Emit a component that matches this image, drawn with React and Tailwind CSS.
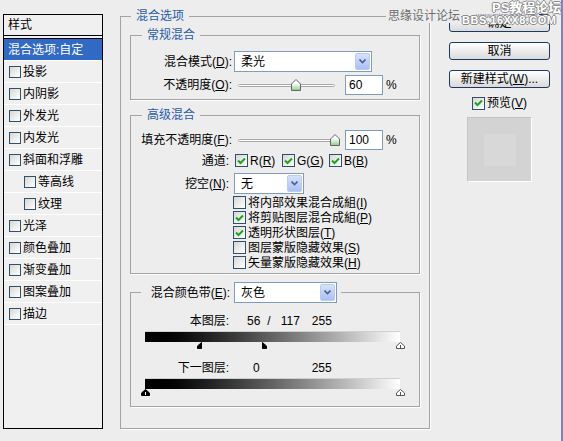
import React from 'react';

const FONT = "font-[family-name:'Liberation_Sans','Noto_Sans_CJK_SC',sans-serif]";

const effects = [
  { label: '投影' },
  { label: '内阴影' },
  { label: '外发光' },
  { label: '内发光' },
  { label: '斜面和浮雕' },
  { label: '等高线', sub: true },
  { label: '纹理', sub: true },
  { label: '光泽' },
  { label: '颜色叠加' },
  { label: '渐变叠加' },
  { label: '图案叠加' },
  { label: '描边' },
];

function Check({ checked, small }) {
  return (
    <span
      className={`${small ? 'w-[12px] h-[12px]' : 'w-[13px] h-[13px]'} shrink-0 border border-[#2f4f6f] bg-linear-to-br from-[#d8d8d2] to-white flex items-center justify-center`}
    >
      {checked && (
        <svg width="9" height="8" viewBox="0 0 9 8">
          <path d="M1 3.5 L3.5 6 L8 1.5" fill="none" stroke="#21a121" strokeWidth="2" />
        </svg>
      )}
    </span>
  );
}

function Select({ value, className }) {
  return (
    <div className={`h-[21px] border border-[#7f9db9] bg-white flex items-center justify-between shrink-0 ${className}`}>
      <span className="pl-[6px]">{value}</span>
      <span className="w-[15px] h-[17px] mr-[1px] rounded-[2px] border border-[#b9cbf3] bg-linear-to-b from-[#d6e2fd] to-[#a9c0f4] flex items-center justify-center">
        <svg width="7" height="5" viewBox="0 0 7 5">
          <path d="M0.5 0.5 L3.5 3.5 L6.5 0.5" fill="none" stroke="#4d6185" strokeWidth="1.6" />
        </svg>
      </span>
    </div>
  );
}

function Slider({ value }) {
  return (
    <div className="relative ml-[6px] w-[97px] h-[20px] flex items-center shrink-0">
      <div className="w-full h-[3px] rounded-full border border-[#a8a8a8] bg-white" />
      <svg className="absolute top-[4px]" style={{ left: value * 0.97 - 5 }} width="10" height="12" viewBox="0 0 10 12">
        <defs>
          <linearGradient id="thumbg" x1="0" y1="0" x2="0" y2="1">
            <stop offset="0.35" stopColor="#ffffff" />
            <stop offset="1" stopColor="#8ccc8c" />
          </linearGradient>
        </defs>
        <path d="M5 0.5 L9.5 5 L9.5 11.5 L0.5 11.5 L0.5 5 Z" fill="url(#thumbg)" stroke="#666" />
      </svg>
    </div>
  );
}

function NumBox({ value }) {
  return (
    <>
      <div className="ml-[10px] w-[38px] h-[20px] border border-[#7f9db9] bg-white flex items-center pl-[3px] shrink-0">{value}</div>
      <span className="ml-[3px]">%</span>
    </>
  );
}

function BlendThumb({ at, kind }) {
  return (
    <svg className="absolute top-0" style={{ left: at - 4.5 }} width="9" height="8" viewBox="0 0 9 8">
      {kind === 'left' && <path d="M4.5 0.5 L4.5 6.5 L0.5 6.5 L0.5 4 Z" fill="#000" stroke="#000" />}
      {kind === 'right' && <path d="M4.5 0.5 L8.5 4 L8.5 6.5 L4.5 6.5 Z" fill="#000" stroke="#000" />}
      {kind === 'black' && (
        <>
          <path d="M4.5 0.5 L8.5 4 L8.5 6.5 L0.5 6.5 L0.5 4 Z" fill="#000" stroke="#000" />
          <path d="M4.5 3 V6" stroke="#fff" />
        </>
      )}
      {kind === 'white' && (
        <>
          <path d="M4.5 0.5 L8.5 4 L8.5 6.5 L0.5 6.5 L0.5 4 Z" fill="#fff" stroke="#555" />
          <path d="M4.5 3 V6" stroke="#555" />
        </>
      )}
    </svg>
  );
}

function Button({ children }) {
  return (
    <div className="h-[18px] rounded-[3px] border border-[#1b3a63] bg-linear-to-b from-white to-[#dadada] flex items-center justify-center">
      {children}
    </div>
  );
}

export default function App() {
  return (
    <div className={`relative w-[563px] h-[441px] overflow-hidden bg-[#ededed] flex text-[12px] leading-[14px] text-black ${FONT}`}>
      {/* Styles list */}
      <div className="ml-[3px] mt-[14px] w-[100px] h-[415px] border border-black bg-[#f0f0f0] flex flex-col shrink-0">
        <div className="h-[21px] border-b border-black flex items-center pl-[4px]">样式</div>
        <div className="h-[3px] border-b border-black" />
        <div className="h-[22px] border-b border-white bg-[#316ac5] text-white flex items-center pl-[4px]">混合选项:自定</div>
        {effects.map((e) => (
          <div key={e.label} className={`h-[22px] border-b border-white flex items-center ${e.sub ? 'pl-[20px]' : 'pl-[5px]'}`}>
            <Check small />
            <span className="ml-[2px]">{e.label}</span>
          </div>
        ))}
      </div>

      {/* Blending options */}
      <fieldset className="ml-[17px] mt-[9px] w-[310px] h-[420px] border border-[#a3a3a3] shadow-[1px_1px_0_#fff] shrink-0 min-w-0">
        <legend className="ml-[10px] px-[5px] text-[#285ba8]">混合选项</legend>
        <div className="px-[9px] pt-[5px]">
          {/* General blending */}
          <fieldset className="border border-[#a3a3a3] shadow-[1px_1px_0_#fff] min-w-0">
            <legend className="ml-[11px] px-[5px] text-[#285ba8]">常规混合</legend>
            <div className="pt-[9px] pb-[4px]">
              <div className="flex items-center">
                <span className="w-[101px] text-right">混合模式(<span className="underline">D</span>):</span>
                <Select value="柔光" className="ml-[2px] w-[138px]" />
              </div>
              <div className="mt-[3px] flex items-center">
                <span className="w-[101px] text-right">不透明度(<span className="underline">O</span>):</span>
                <Slider value={60} />
                <NumBox value="60" />
              </div>
            </div>
          </fieldset>

          {/* Advanced blending */}
          <fieldset className="mt-[8px] border border-[#a3a3a3] shadow-[1px_1px_0_#fff] min-w-0">
            <legend className="ml-[11px] px-[5px] text-[#285ba8]">高级混合</legend>
            <div className="pt-[8px] pb-[3px]">
              <div className="flex items-center">
                <span className="w-[101px] text-right">填充不透明度(<span className="underline">F</span>):</span>
                <Slider value={100} />
                <NumBox value="100" />
              </div>
              <div className="mt-[4px] h-[13px] flex items-center">
                <span className="w-[98px] text-right">通道:</span>
                <div className="ml-[6px] w-[47px] flex items-center gap-[2px]">
                  <Check checked />
                  <span>R(<span className="underline">R</span>)</span>
                </div>
                <div className="w-[47px] flex items-center gap-[2px]">
                  <Check checked />
                  <span>G(<span className="underline">G</span>)</span>
                </div>
                <div className="w-[47px] flex items-center gap-[2px]">
                  <Check checked />
                  <span>B(<span className="underline">B</span>)</span>
                </div>
              </div>
              <div className="mt-[6px] flex items-center">
                <span className="w-[98px] text-right">挖空(<span className="underline">N</span>):</span>
                <Select value="无" className="ml-[5px] w-[70px]" />
              </div>
              <div className="mt-[1px] pl-[102px]">
                {[
                  ['将内部效果混合成組(', 'I', ')', false],
                  ['将剪贴图层混合成組(', 'P', ')', true],
                  ['透明形状图层(', 'T', ')', true],
                  ['图层蒙版隐藏效果(', 'S', ')', false],
                  ['矢量蒙版隐藏效果(', 'H', ')', false],
                ].map(([a, k, b, on]) => (
                  <div key={k} className="h-[15px] flex items-center">
                    <Check checked={on} />
                    <span className="ml-[2px] whitespace-nowrap">
                      {a}
                      <span className="underline">{k}</span>
                      {b}
                    </span>
                  </div>
                ))}
              </div>
            </div>
          </fieldset>

          {/* Blend if */}
          <fieldset className="mt-[8px] border border-[#a3a3a3] shadow-[1px_1px_0_#fff] min-w-0">
            <legend className="ml-[10px] px-[4px] flex items-center">
              <span className="w-[85px] text-right">混合颜色带(<span className="underline">E</span>):</span>
              <Select value="灰色" className="ml-[4px] w-[103px]" />
            </legend>
            <div className="pt-[11px] pb-[9px]">
              <div className="h-[14px] flex items-center">
                <span className="w-[98px] text-right">本图层:</span>
                <span className="ml-[18px]">56</span>
                <span className="ml-[7px]">/</span>
                <span className="ml-[10px]">117</span>
                <span className="ml-[12px]">255</span>
              </div>
              <div className="mt-[3px] ml-[14px] w-[255px] h-[11px] border-t border-[#d0d0d0] bg-linear-to-r from-black to-white" />
              <div className="relative ml-[14px] w-[255px] h-[8px]">
                <BlendThumb at={56} kind="left" />
                <BlendThumb at={117} kind="right" />
                <BlendThumb at={255} kind="white" />
              </div>
              <div className="mt-[11px] h-[14px] flex items-center">
                <span className="w-[98px] text-right">下一图层:</span>
                <span className="ml-[24px]">0</span>
                <span className="ml-[52px]">255</span>
              </div>
              <div className="mt-[3px] ml-[14px] w-[255px] h-[11px] border-t border-[#d0d0d0] bg-linear-to-r from-black to-white" />
              <div className="relative ml-[14px] w-[255px] h-[8px]">
                <BlendThumb at={0} kind="black" />
                <BlendThumb at={255} kind="white" />
              </div>
            </div>
          </fieldset>
        </div>
      </fieldset>

      {/* Buttons and preview */}
      <div className="ml-[19px] mt-[14px] w-[101px] flex flex-col shrink-0">
        <Button>确定</Button>
        <div className="mt-[10px]">
          <Button>取消</Button>
        </div>
        <div className="mt-[10px]">
          <Button>
            新建样式(<span className="underline">W</span>)...
          </Button>
        </div>
        <div className="mt-[8px] h-[14px] flex items-center justify-center gap-[2px]">
          <Check checked />
          <span>预览(<span className="underline">V</span>)</span>
        </div>
        <div className="mt-[7px] self-center w-[65px] h-[65px] bg-[#d3d3d3] border-t border-l border-[#c4c4c4] border-r border-b border-r-white border-b-white flex items-center justify-center">
          <div className="w-[32px] h-[32px] bg-[#d8d8d8]" />
        </div>
      </div>

      <div className="ml-auto w-[2px] self-stretch bg-[#7884c4]" />

      {/* Watermarks */}
      <div className="absolute left-[386px] top-[9px] px-[2px] bg-[#ededed] text-[#6e6e6e] flex items-center">
        思缘设计论坛<span className="ml-[1px] w-[14px] h-px bg-[#888]" />
        <span className="ml-[1px] text-[7px] leading-[8px] text-[#7d86a8]">www.missyuan.com</span>
      </div>
      <div className="absolute left-[492px] top-[1px] text-[13px] leading-[14px] font-bold text-white [text-shadow:1px_0_#8a8a8a,-1px_0_#8a8a8a,0_1px_#8a8a8a,0_-1px_#8a8a8a]">
        PS教程论坛
      </div>
      <div className="absolute left-[462px] top-[14px] text-[11px] leading-[12px] font-bold tracking-[0.5px] text-white [text-shadow:1px_0_#8a8a8a,-1px_0_#8a8a8a,0_1px_#8a8a8a,0_-1px_#8a8a8a]">
        BBS.16XX8.COM
      </div>
    </div>
  );
}
